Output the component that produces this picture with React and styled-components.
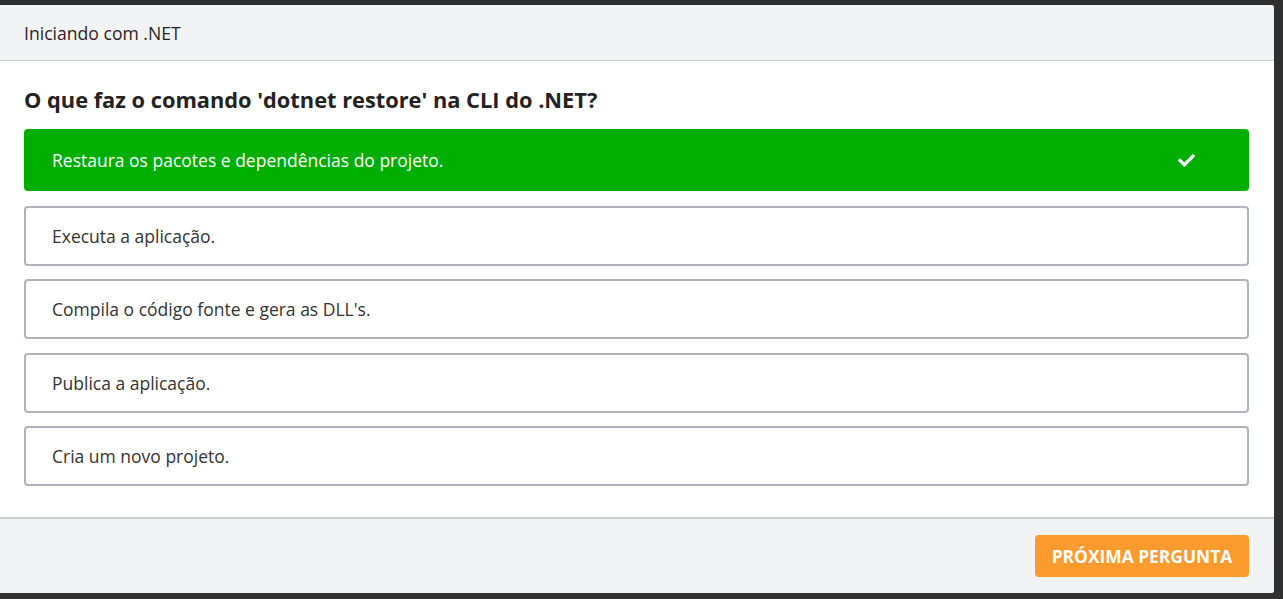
import React from "react";
import styled, { createGlobalStyle } from "styled-components";
import { FaCheck } from "react-icons/fa";

const Global = createGlobalStyle`
  html, body {
    margin: 0;
    padding: 0;
    background: #303030;
  }
  body {
    font-family: "Open Sans", "Noto Sans", sans-serif;
  }
`;

const Page = styled.div`
  padding: 5px 9px 6px 0;
  background: #303030;
`;

const Card = styled.div`
  background: #fff;
  border-radius: 0 3px 3px 0;
  overflow: hidden;
  display: flex;
  flex-direction: column;
`;

const Header = styled.div`
  height: 56px;
  box-sizing: border-box;
  padding: 0 24px;
  display: flex;
  align-items: center;
  background: #f2f3f5;
  border-bottom: 1px solid #c9cbcf;
  color: #2b1f1f;
  font-size: 17.6px;
`;

const Body = styled.div`
  padding: 24px 25px 31px 24px;
`;

const Question = styled.h2`
  margin: 0 0 14px;
  font-size: 21.8px;
  line-height: 30px;
  font-weight: 700;
  color: #222;
`;

const Options = styled.div`
  display: flex;
  flex-direction: column;
  gap: 13.4px;
`;

const Option = styled.div`
  box-sizing: border-box;
  height: ${(p) => (p.$correct ? "62px" : "60px")};
  margin-bottom: ${(p) => (p.$correct ? "1.6px" : "0")};
  padding: 0 52px 0 26px;
  display: flex;
  align-items: center;
  justify-content: space-between;
  border-radius: 4px;
  border: 2px solid ${(p) => (p.$correct ? "#00ae00" : "#adb4bc")};
  background: ${(p) => (p.$correct ? "#00ae00" : "#fff")};
  color: ${(p) => (p.$correct ? "#fff" : "#333")};
  font-size: 17.5px;
  cursor: pointer;
`;

const Check = styled(FaCheck)`
  color: #fff;
  font-size: 17px;
`;

const Footer = styled.div`
  background: #f2f3f5;
  border-top: 2px solid #cbcdd1;
  padding: 16px 25px 16px 24px;
  display: flex;
  justify-content: flex-end;
`;

const NextButton = styled.button`
  height: 42px;
  width: 214px;
  border: none;
  border-radius: 4px;
  background: #fb9a2d;
  color: #fff;
  font-family: "Open Sans", "Noto Sans", sans-serif;
  font-size: 17.4px;
  font-weight: 700;
  text-transform: uppercase;
  cursor: pointer;
`;

const answers = [
  { text: "Restaura os pacotes e dependências do projeto.", correct: true },
  { text: "Executa a aplicação." },
  { text: "Compila o código fonte e gera as DLL's." },
  { text: "Publica a aplicação." },
  { text: "Cria um novo projeto." },
];

export default function App() {
  return (
    <Page>
      <Global />
      <Card>
        <Header>Iniciando com .NET</Header>
        <Body>
          <Question>O que faz o comando 'dotnet restore' na CLI do .NET?</Question>
          <Options>
            {answers.map((a) => (
              <Option key={a.text} $correct={a.correct}>
                <span>{a.text}</span>
                {a.correct && <Check />}
              </Option>
            ))}
          </Options>
        </Body>
        <Footer>
          <NextButton>Próxima pergunta</NextButton>
        </Footer>
      </Card>
    </Page>
  );
}
